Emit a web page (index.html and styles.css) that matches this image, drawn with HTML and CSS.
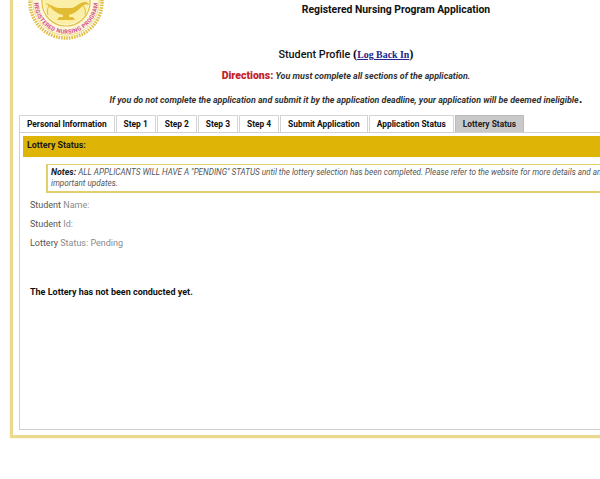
FILE: index.html
```html
<!DOCTYPE html>
<html lang="en">
<head>
<meta charset="utf-8">
<title>Registered Nursing Program Application</title>
<link rel="stylesheet" href="styles.css">
</head>
<body>
<div class="frame">
  <header class="top">
    <svg class="seal" viewBox="0 0 76 41" width="76" height="41" aria-hidden="true">
      <circle class="scallop" cx="38" cy="2" r="36"/>
      <circle class="ring" cx="38" cy="2" r="33.2"/>
      <circle class="ring-thin" cx="38" cy="2" r="24"/>
      <circle class="inner" cx="38" cy="2" r="22.5"/>
      <path class="lamp" d="M17 3c5 1 8 4 13 5h14c4-1 7-5 12-6 3-.5 5 1 5 3-2-1-3-1-5 0-3 2-6 6-10 8-2 1-4 1.500-5 2v2h4l2 3H29l2-3h4v-2c-5-1-9-4-12-7-2-2-4-4-6-5z"/>
      <path class="lamp-line" d="M55 6c2 2 3 5 2 9M21 6c-2 3-2 6-1 9"/>
      <defs><path id="arc" d="M6.300 2a31.700 31.700 0 0 0 63.400 0"/></defs>
      <text class="seal-text"><textPath href="#arc" startOffset="50%" text-anchor="middle">REGISTERED NURSING PROGRAM</textPath></text>
    </svg>
    <h1 class="title">Registered Nursing Program Application</h1>
  </header>
  <section class="intro">
    <p class="profile">Student Profile <span class="paren">(<a href="#">Log Back In</a>)</span></p>
    <p class="directions"><strong>Directions:</strong> <em>You must complete all sections of the application.</em></p>
    <p class="warning"><em>If you do not complete the application and submit it by the application deadline, your application will be deemed ineligible</em><span class="dot">.</span></p>
  </section>
  <nav class="tabs">
    <a class="tab" href="#">Personal Information</a>
    <a class="tab" href="#">Step 1</a>
    <a class="tab" href="#">Step 2</a>
    <a class="tab" href="#">Step 3</a>
    <a class="tab" href="#">Step 4</a>
    <a class="tab" href="#">Submit Application</a>
    <a class="tab" href="#">Application Status</a>
    <a class="tab active" href="#">Lottery Status</a>
  </nav>
  <main class="panel">
    <h2 class="bar">Lottery Status:</h2>
    <div class="notes"><strong>Notes:</strong> <em>ALL APPLICANTS WILL HAVE A "PENDING" STATUS until the lottery selection has been completed. Please refer to the website for more details and any important updates.</em></div>
    <p class="field">Student <span class="faint">Name:</span></p>
    <p class="field">Student <span class="faint">Id:</span></p>
    <p class="field">Lottery <span class="faint">Status: Pending</span></p>
    <p class="result">The Lottery has not been conducted yet.</p>
  </main>
</div>
</body>
</html>
```
FILE: styles.css
```css
html, body {
  margin: 0;
  height: 479px;
  overflow: hidden;
  background: #fff;
}
body {
  font-family: Roboto, "Liberation Sans", sans-serif;
  color: #111;
}
.frame {
  box-sizing: border-box;
  width: 780px;
  height: 438px;
  margin-left: 10px;
  padding: 0 6px 6px 6px;
  border-left: 3px solid #e9da8f;
  border-bottom: 3px solid #e9da8f;
  box-shadow: 0 0 2px #f3e9b5;
}
.top {
  display: flow-root;
  height: 46px;
}
.seal {
  float: left;
  margin-left: 9px;
}
.scallop {
  fill: none;
  stroke: #e0bd45;
  stroke-width: 3.5;
  stroke-dasharray: 1.600 1;
}
.ring {
  fill: #fdf7dc;
  stroke: #e9cf6a;
  stroke-width: 0.8;
}
.ring-thin {
  fill: none;
  stroke: #e3bf3f;
  stroke-width: 1.2;
}
.inner {
  fill: #fbeea6;
}
.lamp {
  fill: #e2bb35;
}
.lamp-line {
  fill: none;
  stroke: #e2bb35;
  stroke-width: 1;
}
.seal-text {
  font-size: 5.800px;
  font-weight: 700;
  fill: #d4508c;
  letter-spacing: 0.300px;
}
.title {
  margin: 3px 0 0;
  padding-right: 96px;
  font-size: 10.400px;
  line-height: 14px;
  font-weight: 700;
  text-align: center;
}
.intro {
  width: 654px;
  text-align: center;
}
.intro p {
  margin: 0;
}
.profile {
  font-size: 10.800px;
  line-height: 16px;
  font-weight: 500;
}
.paren {
  font-family: "Liberation Serif", serif;
  font-size: 12.500px;
  font-weight: 700;
}
.paren a {
  font-size: 9.900px;
  color: #23238e;
}
.intro .directions {
  margin-top: 5px;
  font-size: 8.950px;
  line-height: 16px;
  font-weight: 700;
  color: #333;
}
.directions strong {
  font-size: 10.500px;
  color: #c4222b;
}
.intro .warning {
  margin-top: 7px;
  font-size: 8.900px;
  line-height: 16px;
  font-weight: 700;
  color: #333;
}
.dot {
  font-size: 13px;
  color: #111;
}
.tabs {
  display: flex;
  gap: 1px;
  margin-top: 7px;
  height: 17px;
}
.tab {
  box-sizing: border-box;
  padding: 0 7px;
  border: 1px solid #d4d4d4;
  border-bottom: 0;
  font-size: 8.400px;
  line-height: 16px;
  font-weight: 700;
  color: #111;
  text-decoration: none;
  background: #fff;
}
.tab.active {
  background: #c9c9c9;
  border-color: #bbb;
  color: #222;
}
.panel {
  box-sizing: border-box;
  height: 298px;
  padding: 3px;
  border: 1px solid #d0d0d0;
}
.bar {
  margin: 0;
  padding: 0 4px;
  height: 21px;
  line-height: 19px;
  font-size: 8.900px;
  font-weight: 700;
  color: #1a1a1a;
  background: #deb407;
}
.notes {
  box-sizing: border-box;
  width: 590px;
  margin: 7px 0 0 23px;
  height: 29px;
  padding: 2px 3px;
  border: 1px solid #e3cf6a;
  border-left-width: 2px;
  border-bottom-width: 2px;
  border-right: 0;
  font-size: 8.150px;
  line-height: 11px;
  color: #555;
}
.notes strong {
  color: #222;
  font-style: italic;
  font-size: 8.800px;
}
.field {
  margin: 0 0 0 7px;
  font-size: 9px;
  line-height: 19px;
  color: #555;
}
.faint {
  color: #8a8a8a;
}
.notes + .field {
  margin-top: 3px;
}
.result {
  margin: 30px 0 0 7px;
  font-size: 9px;
  line-height: 19px;
  font-weight: 700;
  color: #111;
}
```
